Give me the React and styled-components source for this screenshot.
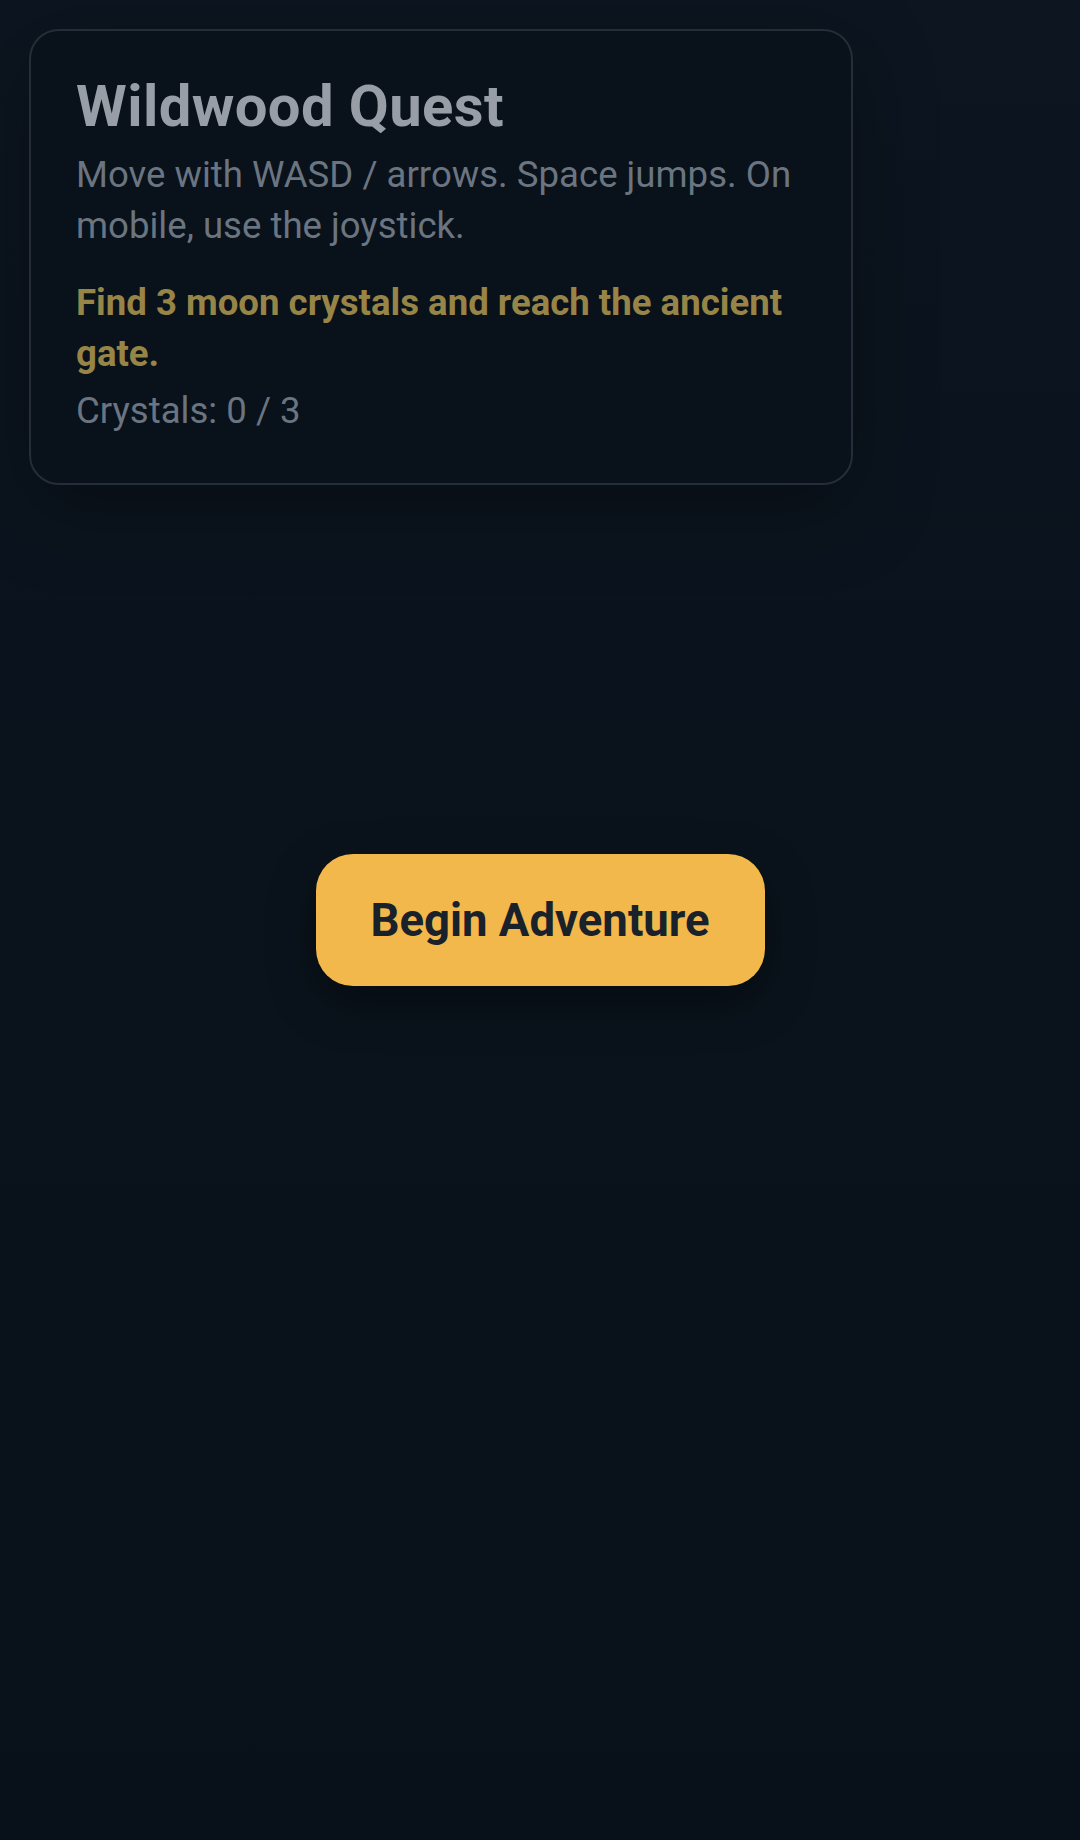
import styled, { createGlobalStyle } from "styled-components";

const GlobalStyle = createGlobalStyle`
  html, body {
    margin: 0;
    padding: 0;
    background: #0a131c;
  }
  body {
    font-family: Roboto, "Noto Sans", "Liberation Sans", sans-serif;
  }
  * {
    box-sizing: border-box;
  }
`;

const Screen = styled.main`
  display: grid;
  grid-template: 1fr / 1fr;
  width: 1080px;
  height: 1840px;
  background: linear-gradient(180deg, #0c1520 0%, #0a131c 50%, #08111a 100%);
  overflow: hidden;
`;

const HudCard = styled.section`
  grid-area: 1 / 1;
  align-self: start;
  justify-self: start;
  margin: 29px 0 0 29px;
  width: 824px;
  padding: 41px 45px 47px;
  border: 2px solid #252d38;
  border-radius: 30px;
  background: #09111a;
  box-shadow: 0 24px 80px rgba(0, 0, 0, 0.35);
`;

const Title = styled.h1`
  margin: 0;
  font-size: 58px;
  line-height: 1.2;
  font-weight: 700;
  letter-spacing: 0.4px;
  color: #989ea6;
`;

const Text = styled.p`
  margin: ${(p) => p.$gap || "0"} 0 0;
  font-size: 36.6px;
  line-height: 51px;
  font-weight: ${(p) => (p.$bold ? 700 : 400)};
  color: ${(p) => (p.$gold ? "#978447" : "#6a7581")};
`;

const StartButton = styled.button`
  grid-area: 1 / 1;
  align-self: center;
  justify-self: center;
  width: 449px;
  height: 132px;
  border: none;
  border-radius: 37px;
  background: #f2b84b;
  color: #19212b;
  font-family: Roboto, "Noto Sans", "Liberation Sans", sans-serif;
  font-size: 45.5px;
  font-weight: 700;
  cursor: pointer;
  box-shadow: 0 16px 48px rgba(0, 0, 0, 0.45);
`;

export default function App() {
  return (
    <>
      <GlobalStyle />
      <Screen>
        <HudCard>
          <Title>Wildwood Quest</Title>
          <Text $gap="7px">
            Move with WASD / arrows. Space jumps. On mobile, use the joystick.
          </Text>
          <Text $gap="26px" $gold $bold>
            Find 3 moon crystals and reach the ancient gate.
          </Text>
          <Text $gap="6px">Crystals: 0 / 3</Text>
        </HudCard>
        <StartButton>Begin Adventure</StartButton>
      </Screen>
    </>
  );
}
